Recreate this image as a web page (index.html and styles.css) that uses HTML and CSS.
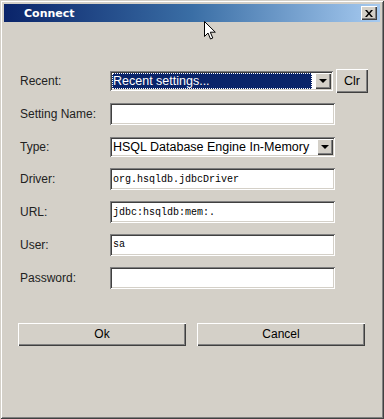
FILE: index.html
```html
<!DOCTYPE html>
<html lang="en">
<head>
  <meta charset="UTF-8">
  <title>Connect</title>
  <link rel="stylesheet" href="styles.css">
</head>
<body>

  <div class="window">
    <div class="titlebar">
      <span class="title">Connect</span>
      <span class="close-btn">
        <svg width="8" height="7" viewBox="0 0 8 7"><path d="M0 0h2l2 2.5L6 0h2L5 3.5 8 7H6L4 4.5 2 7H0l3-3.5z" fill="#000"/></svg>
      </span>
    </div>

    <div class="content">
      <div class="form">
        <label>Recent:</label>
        <div class="field-row">
          <div class="combo recent">
            <span class="combo-text"><span class="focus">Recent settings...</span></span>
            <span class="arrow-btn"><i></i></span>
          </div>
          <button class="btn clr-btn">Clr</button>
        </div>

        <label>Setting Name:</label>
        <div class="input"></div>

        <label>Type:</label>
        <div class="combo">
          <span class="combo-text">HSQL Database Engine In-Memory</span>
          <span class="arrow-btn"><i></i></span>
        </div>

        <label>Driver:</label>
        <div class="input mono">org.hsqldb.jdbcDriver</div>

        <label>URL:</label>
        <div class="input mono">jdbc:hsqldb:mem:.</div>

        <label>User:</label>
        <div class="input mono">sa</div>

        <label>Password:</label>
        <div class="input"></div>
      </div>

      <div class="actions">
        <button class="btn">Ok</button>
        <button class="btn">Cancel</button>
      </div>
    </div>

    <!-- mouse pointer over the title bar -->
    <svg class="cursor" width="13" height="20" viewBox="0 0 13 20">
      <path d="M0.5 0.5v15l3.5-3.5 2.5 6 2.3-1-2.5-5.8h5z" fill="#fff" stroke="#000" stroke-width="1"/>
    </svg>
  </div>

</body>
</html>
```

FILE: styles.css
```css
body {
  margin: 0;
  font-family: "Liberation Sans", Arial, sans-serif;
  font-size: 12px;
  color: #000;
  background: #d4d0c8;
}
.window {
  position: relative;
  width: 384px;
  height: 419px;
  box-sizing: border-box;
  padding: 4px 4px 4px 4px;
  background: #d4d0c8;
  box-shadow: inset 1px 1px 0 #d4d0c8, inset -1px -1px 0 #404040,
              inset 2px 2px 0 #fff, inset -2px -2px 0 #808080;
  display: flex;
  flex-direction: column;
}
.titlebar {
  height: 18px;
  display: flex;
  align-items: center;
  justify-content: space-between;
  padding: 0 3px 0 20px;
  background: linear-gradient(to right, #0a246a 0%, #3a6ea5 50%, #a6caf0 100%);
}
.title {
  color: #fff;
  font-family: Tahoma, "DejaVu Sans", sans-serif;
  font-weight: bold;
  font-size: 11px;
}
.close-btn {
  width: 16px;
  height: 14px;
  box-sizing: border-box;
  display: flex;
  align-items: center;
  justify-content: center;
  background: #d4d0c8;
  box-shadow: inset 1px 1px 0 #fff, inset -1px -1px 0 #404040, inset -2px -2px 0 #808080;
}
.content {
  padding: 48px 14px 0 16px;
}
.form {
  display: grid;
  grid-template-columns: 90px 1fr;
  grid-auto-rows: 22px;
  row-gap: 10.8px;
  align-items: center;
}
.form label {
  font-size: 12px;
  color: #222;
}
.field-row {
  display: flex;
  align-items: center;
  gap: 3px;
}
.input, .combo {
  width: 225px;
  height: 22px;
  box-sizing: border-box;
  background: #fff;
  box-shadow: inset 1px 1px 0 #808080, inset -1px -1px 0 #fff,
              inset 2px 2px 0 #404040, inset -2px -2px 0 #d4d0c8;
  padding: 2px 3px;
  display: flex;
  align-items: center;
}
.combo {
  height: 20px;
  padding: 2px 2px 2px 2px;
}
.combo.recent {
  width: 223px;
}
.combo-text {
  flex: 1;
  height: 100%;
  display: flex;
  align-items: center;
  padding-left: 1px;
  font-size: 12.5px;
  white-space: nowrap;
  overflow: hidden;
}
.recent .combo-text {
  background: #0a246a;
  color: #fff;
  box-sizing: border-box;
  outline: 1px dotted #fff;
  outline-offset: -1px;
}
.arrow-btn {
  width: 16px;
  height: 16px;
  margin-left: 3px;
  box-sizing: border-box;
  background: #d4d0c8;
  box-shadow: inset 1px 1px 0 #fff, inset -1px -1px 0 #404040, inset -2px -2px 0 #808080;
  display: flex;
  align-items: center;
  justify-content: center;
}
.arrow-btn i {
  width: 0;
  height: 0;
  border-left: 4px solid transparent;
  border-right: 4px solid transparent;
  border-top: 4px solid #000;
}
.mono {
  font-family: "Liberation Mono", "DejaVu Sans Mono", monospace;
  font-size: 10px;
  color: #000;
}
.btn {
  font-family: "Liberation Sans", Arial, sans-serif;
  font-size: 12px;
  color: #000;
  background: #d4d0c8;
  border: none;
  padding: 0;
  height: 23px;
  box-shadow: inset 1px 1px 0 #fff, inset -1px -1px 0 #404040, inset -2px -2px 0 #808080;
}
.clr-btn {
  width: 32px;
  height: 24px;
  font-size: 12.5px;
}
.actions {
  display: grid;
  grid-template-columns: 168px 168px;
  column-gap: 11px;
  margin-top: 34px;
  margin-left: -2px;
}
.cursor {
  position: absolute;
  left: 204px;
  top: 21px;
}
```
